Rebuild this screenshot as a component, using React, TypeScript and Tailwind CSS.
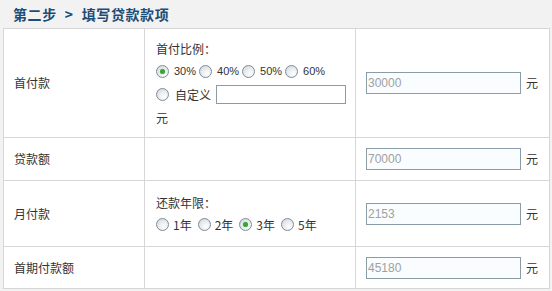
import React from 'react';

const cjk = { fontFamily: '"Noto Sans CJK SC", "Liberation Sans", sans-serif' };

const Radio = ({ checked = false }: { checked?: boolean }) => (
    <span className="inline-flex h-[13px] w-[13px] shrink-0 items-center justify-center rounded-full border border-[#7d8c9a] bg-[radial-gradient(circle_at_65%_70%,#ffffff_0%,#e6e8ea_55%,#cfd3d8_100%)]">
        {checked && <span className="h-[5px] w-[5px] rounded-full bg-[#38a538] shadow-[0_0_1px_#7fd07f]" />}
    </span>
);

const Option = ({ label, checked, pct }: { label: string; checked?: boolean; pct?: boolean }) => (
    <span className={`inline-flex items-center ${pct ? 'mr-[3px] gap-[5px]' : 'mr-[6px] gap-[4px]'}`}>
        <Radio checked={checked} />
        <span
            className={`${pct ? 'text-[11px]' : 'text-[12px]'} text-[#333]`}
            style={pct ? { fontFamily: '"Liberation Sans", sans-serif' } : undefined}
        >
            {label}
        </span>
    </span>
);

const AmountInput = ({ value }: { value: string }) => (
    <div className="flex items-center">
        <input
            readOnly
            value={value}
            className="h-[22px] w-[155px] border border-[#8c9ca6] bg-[#fafdff] px-[1px] text-[12px] text-[#a0a0a0] outline-none"
            style={{ fontFamily: '"Liberation Sans", sans-serif' }}
        />
        <span className="ml-[5px] text-[12px] text-[#333]">元</span>
    </div>
);

const Row = ({ label, middle, value, h }: { label: string; middle?: React.ReactNode; value: string; h: string }) => (
    <div className={`grid grid-cols-[141px_211px_194px] border-b border-[#d6d6d6] ${h}`}>
        <div className="flex items-center border-r border-[#d6d6d6] pl-[10px] text-[12px] text-[#333]">{label}</div>
        <div className="flex flex-col justify-center border-r border-[#d6d6d6] pl-[11px] text-[12px] text-[#333]">{middle}</div>
        <div className="flex items-center border-r border-[#d6d6d6] pl-[10px]">
            <AmountInput value={value} />
        </div>
    </div>
);

export default function App() {
    return (
        <div className="h-[291px] w-[552px] overflow-hidden bg-[#f2f2f2]" style={cjk}>
            <div className="flex h-[28px] items-center pl-[13px] text-[14px] font-bold tracking-[0.6px] text-[#1e4c74]">
                第二步 <span className="mx-[8px]">&gt;</span> 填写贷款款项
            </div>
            <div className="ml-[3px] w-[547px] border-l border-t border-[#d6d6d6] bg-white">
                <Row
                    h="h-[109px]"
                    label="首付款"
                    value="30000"
                    middle={
                        <div className="flex flex-col">
                            <div className="flex h-[23px] items-center">首付比例：</div>
                            <div className="flex h-[23px] items-center">
                                <Option pct label="30%" checked />
                                <Option pct label="40%" />
                                <Option pct label="50%" />
                                <Option pct label="60%" />
                            </div>
                            <div className="flex h-[23px] items-center">
                                <Radio />
                                <span className="ml-[6px]">自定义</span>
                                <span className="ml-[5px] h-[19px] w-[130px] border border-[#8c9ca6] bg-white" />
                            </div>
                            <div className="flex h-[23px] items-center">元</div>
                        </div>
                    }
                />
                <Row h="h-[43px]" label="贷款额" value="70000" />
                <Row
                    h="h-[66px]"
                    label="月付款"
                    value="2153"
                    middle={
                        <div className="flex flex-col">
                            <div className="flex h-[22px] items-center">还款年限：</div>
                            <div className="flex h-[22px] items-center">
                                <Option label="1年" />
                                <Option label="2年" />
                                <Option label="3年" checked />
                                <Option label="5年" />
                            </div>
                        </div>
                    }
                />
                <Row h="h-[42px]" label="首期付款额" value="45180" />
            </div>
        </div>
    );
}
